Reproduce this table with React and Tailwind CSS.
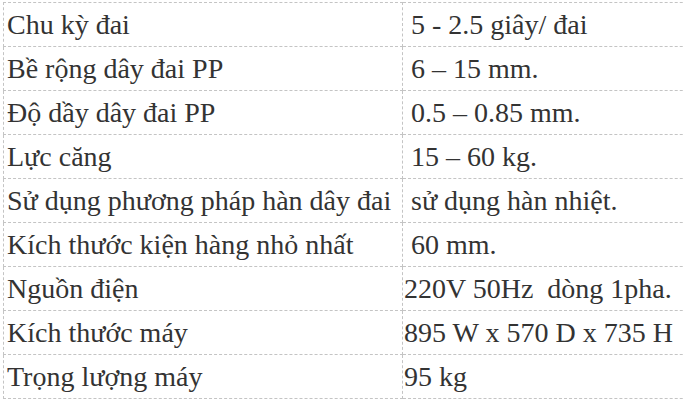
const rows = [
  ["Chu kỳ đai", "\u00a05 - 2.5 giây/ đai"],
  ["Bề rộng dây đai PP", "\u00a06 – 15 mm."],
  ["Độ dầy dây đai PP", "\u00a00.5 – 0.85 mm."],
  ["Lực căng", "\u00a015 – 60 kg."],
  ["Sử dụng phương pháp hàn dây đai", "\u00a0sử dụng hàn nhiệt."],
  ["Kích thước kiện hàng nhỏ nhất", "\u00a060 mm."],
  ["Nguồn điện", "220V 50Hz\u00a0 dòng 1pha."],
  ["Kích thước máy", "895 W x 570 D x 735 H"],
  ["Trọng lượng máy", "95 kg"],
];

export default function App() {
  return (
    <div className="w-[683px] h-[405px] overflow-hidden bg-white pl-[3px] pt-[2px]">
      <table
        className="border-collapse w-[720px] text-[28px] text-[#333]"
        style={{ fontFamily: "'Liberation Serif', 'Times New Roman', serif" }}
      >
        <tbody>
          {rows.map(([k, v]) => (
            <tr key={k} className="h-[44px]">
              <td className="w-[399px] border border-dashed border-[#c4c4c4] px-[3px] py-0 whitespace-nowrap">{k}</td>
              <td className="border border-dashed border-[#c4c4c4] px-[1px] py-0 whitespace-nowrap">{v}</td>
            </tr>
          ))}
        </tbody>
      </table>
    </div>
  );
}
